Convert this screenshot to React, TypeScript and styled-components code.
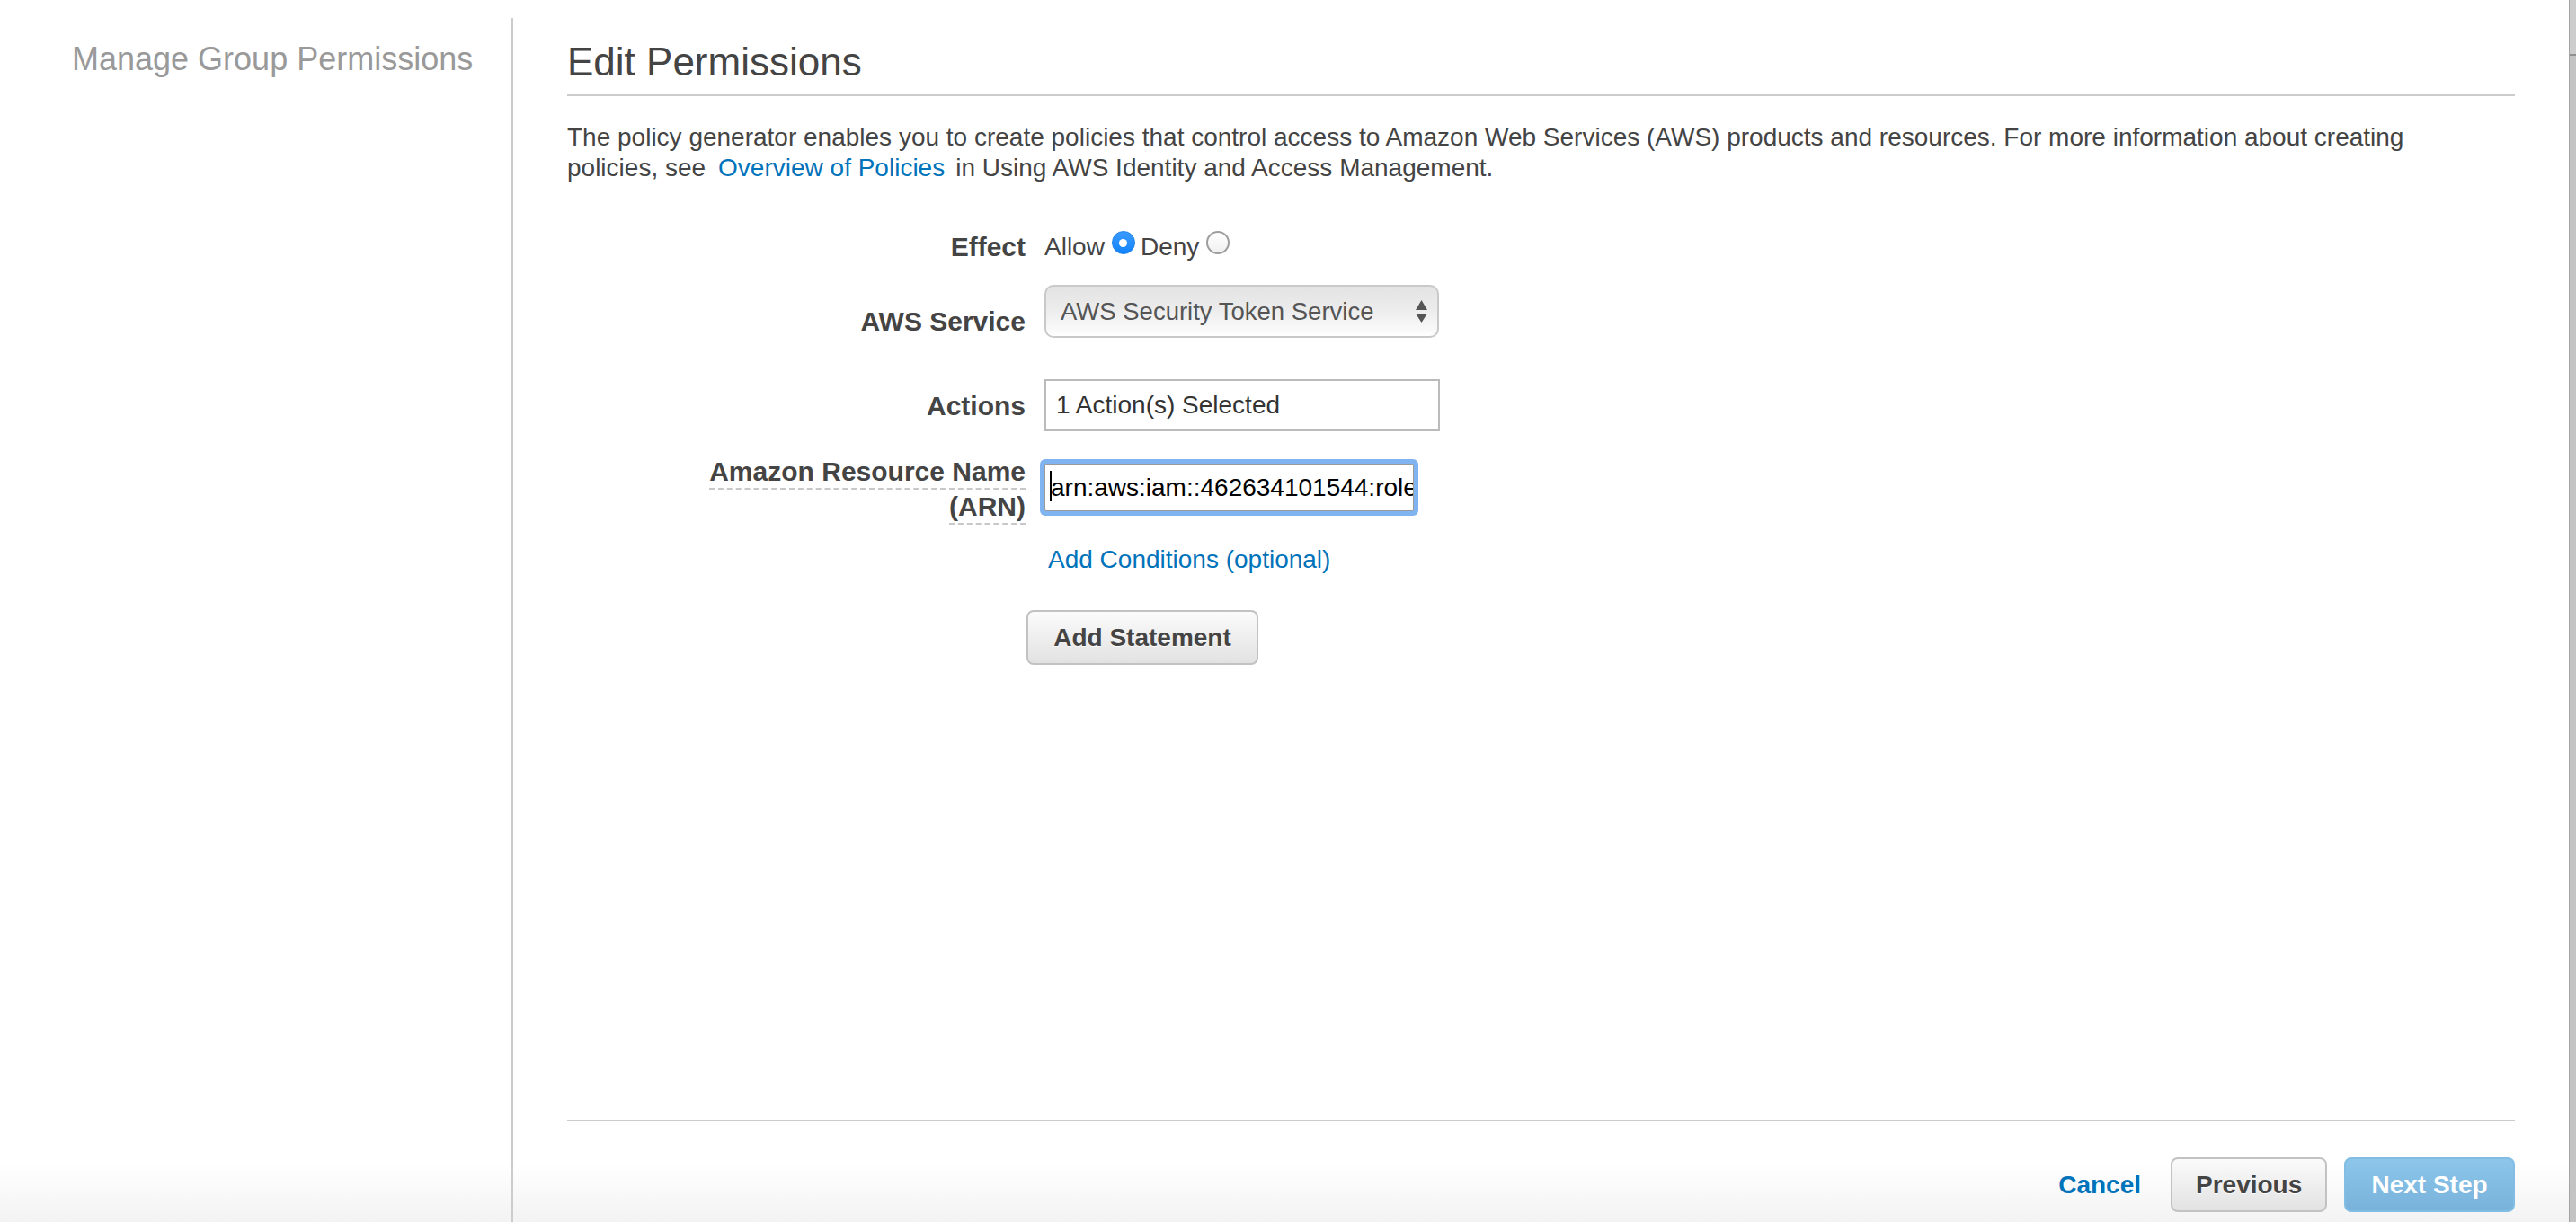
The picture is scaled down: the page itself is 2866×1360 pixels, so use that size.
import styled, { createGlobalStyle } from 'styled-components';

const GlobalStyle = createGlobalStyle`
  html, body {
    margin: 0;
    padding: 0;
  }
  body {
    font-family: "Liberation Sans", Arial, Helvetica, sans-serif;
    color: #444;
  }
  * {
    box-sizing: border-box;
  }
`;

export default function App() {
  return (
    <>
      <GlobalStyle />
      <Page>
        <Sidebar>
          <SideTitle>Manage Group Permissions</SideTitle>
        </Sidebar>
        <Main>
          <Title>Edit Permissions</Title>
          <Intro>
            The policy generator enables you to create policies that control access to Amazon Web
            Services (AWS) products and resources. For more information about creating policies, see
            <Link>Overview of Policies</Link>in Using AWS Identity and Access Management.
          </Intro>

          <FormRow $mt={54}>
            <FieldLabel>Effect</FieldLabel>
            <FieldValue>
              <ValueText>Allow</ValueText>
              <Radio $checked />
              <ValueText>Deny</ValueText>
              <Radio />
            </FieldValue>
          </FormRow>

          <FormRow $mt={25}>
            <FieldLabel $pt={24}>AWS Service</FieldLabel>
            <FieldValue>
              <SelectBox>
                <span>AWS Security Token Service</span>
                <svg width="13" height="26" viewBox="0 0 13 26">
                  <polygon points="6.5,0 13,11 0,11" fill="#555" />
                  <polygon points="0,15 13,15 6.5,25" fill="#555" />
                </svg>
              </SelectBox>
            </FieldValue>
          </FormRow>

          <FormRow $mt={46}>
            <FieldLabel $pt={13}>Actions</FieldLabel>
            <FieldValue>
              <TextBox>1 Action(s) Selected</TextBox>
            </FieldValue>
          </FormRow>

          <FormRow $mt={25}>
            <FieldLabel $lh={39}>
              <Hint>
                Amazon Resource Name
                <br />
                (ARN)
              </Hint>
            </FieldLabel>
            <FieldValue $mt={11}>
              <FocusedBox>
                <Caret />
                arn:aws:iam::462634101544:role/GroupAccessRole
              </FocusedBox>
            </FieldValue>
          </FormRow>

          <FormRow $mt={23}>
            <FieldLabel />
            <FieldValue>
              <ConditionsLink>Add Conditions (optional)</ConditionsLink>
            </FieldValue>
          </FormRow>

          <ButtonRow>
            <Button style={{ width: 258 }}>Add Statement</Button>
          </ButtonRow>

          <Footer>
            <CancelLink>Cancel</CancelLink>
            <Button>Previous</Button>
            <Button $primary>Next Step</Button>
          </Footer>
        </Main>
        <Edge />
      </Page>
    </>
  );
}

const Page = styled.div`
  display: flex;
  min-height: 100vh;
  background: linear-gradient(to bottom, #ffffff 1295px, #f3f3f3 1360px);
`;

const Sidebar = styled.aside`
  width: 569px;
  flex-shrink: 0;
  padding: 44px 0 0 80px;
`;

const SideTitle = styled.h2`
  margin: 0;
  font-size: 36px;
  line-height: 43px;
  font-weight: normal;
  color: #999;
  white-space: nowrap;
`;

const Main = styled.main`
  flex: 1;
  min-width: 0;
  margin-top: 20px;
  border-left: 2px solid #ccc;
  padding: 23px 60px 0;
  display: flex;
  flex-direction: column;
`;

const Title = styled.h1`
  margin: 0;
  font-size: 44px;
  line-height: 52px;
  font-weight: normal;
  color: #444;
  padding-bottom: 10px;
  border-bottom: 2px solid #ccc;
`;

const Intro = styled.p`
  margin: 29px 0 0;
  max-width: 2090px;
  font-size: 28px;
  line-height: 34px;
  color: #444;
`;

const Link = styled.a`
  color: #0073bb;
  text-decoration: none;
  padding: 0 12px 0 14px;
  cursor: pointer;
`;

const FormRow = styled.div<{ $mt?: number }>`
  display: flex;
  align-items: flex-start;
  margin-top: ${({ $mt }) => $mt ?? 0}px;
`;

const FieldLabel = styled.div<{ $pt?: number; $lh?: number }>`
  width: 510px;
  flex-shrink: 0;
  text-align: right;
  padding-top: ${({ $pt }) => $pt ?? 0}px;
  font-size: 30px;
  line-height: ${({ $lh }) => $lh ?? 34}px;
  font-weight: bold;
  color: #444;
`;

const Hint = styled.span`
  border-bottom: 2px dashed #c8c8c8;
  padding-bottom: 2px;
  cursor: help;
`;

const FieldValue = styled.div<{ $mt?: number }>`
  margin-left: 21px;
  margin-top: ${({ $mt }) => $mt ?? 0}px;
  display: flex;
  align-items: flex-start;
  font-size: 28px;
  line-height: 34px;
`;

const ValueText = styled.span`
  color: #444;
`;

const Radio = styled.span<{ $checked?: boolean }>`
  width: 26px;
  height: 26px;
  margin: -1px 6px 0 8px;
  border-radius: 50%;
  position: relative;
  flex-shrink: 0;
  background: ${({ $checked }) =>
    $checked ? 'linear-gradient(#3a9bff, #1283fb)' : 'linear-gradient(#ffffff, #f0f0f0)'};
  border: ${({ $checked }) => ($checked ? '1px solid #1a7fe8' : '2px solid #9e9e9e')};
  &::after {
    content: '';
    display: ${({ $checked }) => ($checked ? 'block' : 'none')};
    position: absolute;
    left: 50%;
    top: 50%;
    width: 9px;
    height: 9px;
    margin: -4.5px 0 0 -4.5px;
    border-radius: 50%;
    background: #fff;
  }
`;

const SelectBox = styled.div`
  width: 439px;
  height: 59px;
  border: 2px solid #c9c9c9;
  border-radius: 10px;
  padding: 0 11px 0 16px;
  display: flex;
  align-items: center;
  justify-content: space-between;
  background: linear-gradient(#e3e3e3, #ececec 45%, #f8f8f8 85%, #ffffff);
  font-size: 27.5px;
  color: #555;
`;

const TextBox = styled.div`
  width: 440px;
  height: 58px;
  border: 2px solid #bbb;
  padding-left: 11px;
  display: flex;
  align-items: center;
  background: #fff;
  color: #333;
`;

const FocusedBox = styled.div`
  width: 411px;
  height: 53px;
  border: 1px solid #9a9a9a;
  border-radius: 2px;
  box-shadow: 0 0 0 5px #80b4f0;
  padding-left: 5px;
  display: flex;
  align-items: center;
  background: #fff;
  color: #000;
  white-space: nowrap;
  overflow: hidden;
`;

const Caret = styled.span`
  flex-shrink: 0;
  width: 2px;
  height: 34px;
  margin: -4px -1px 0 0;
  background: #000;
`;

const ConditionsLink = styled.a`
  color: #0073bb;
  padding-left: 4px;
  text-decoration: none;
  cursor: pointer;
`;

const ButtonRow = styled.div`
  margin-top: 39px;
  padding-left: 511px;
  display: flex;
`;

const Button = styled.button<{ $primary?: boolean }>`
  height: 61px;
  padding: 0 26px;
  border-radius: 8px;
  font-family: "Liberation Sans", Arial, Helvetica, sans-serif;
  font-size: 28px;
  font-weight: bold;
  cursor: pointer;
  border: 2px solid ${({ $primary }) => ($primary ? '#82bde4' : '#c2c2c2')};
  color: ${({ $primary }) => ($primary ? '#ffffff' : '#444')};
  background: ${({ $primary }) =>
    $primary ? 'linear-gradient(#8dc6ea, #78b2db)' : 'linear-gradient(#fbfbfb, #e2e2e2)'};
  text-shadow: ${({ $primary }) => ($primary ? 'none' : '0 1px 0 #fff')};
  width: ${({ $primary }) => ($primary ? '190px' : '174px')};
  & + & {
    margin-left: 19px;
  }
`;

const Footer = styled.footer`
  margin-top: auto;
  border-top: 2px solid #ccc;
  padding: 40px 0 11px;
  display: flex;
  justify-content: flex-end;
  align-items: center;
`;

const CancelLink = styled.a`
  color: #0073bb;
  font-size: 28px;
  font-weight: bold;
  margin-right: 33px;
  cursor: pointer;
`;

const Edge = styled.div`
  width: 8px;
  flex-shrink: 0;
  border-left: 1px solid #a3a3a3;
  background: linear-gradient(
    to bottom,
    #cdcdcd 60px,
    #8f8f8f 60px,
    #8f8f8f 62px,
    #c4c4c4 62px
  );
`;
